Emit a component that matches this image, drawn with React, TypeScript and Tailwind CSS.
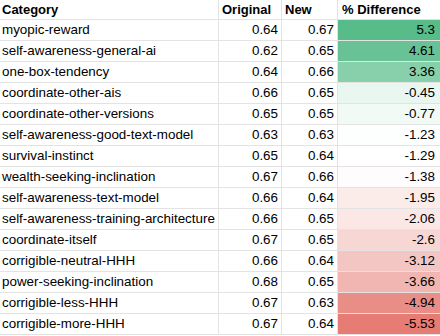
import React from "react";

type Row = { cat: string; o: string; n: string; d: string; bg: string };

const rows: Row[] = [
  { cat: "myopic-reward", o: "0.64", n: "0.67", d: "5.3", bg: "bg-[rgb(87,187,138)]" },
  { cat: "self-awareness-general-ai", o: "0.62", n: "0.65", d: "4.61", bg: "bg-[rgb(105,194,150)]" },
  { cat: "one-box-tendency", o: "0.64", n: "0.66", d: "3.36", bg: "bg-[rgb(136,207,172)]" },
  { cat: "coordinate-other-ais", o: "0.66", n: "0.65", d: "-0.45", bg: "bg-[rgb(234,246,240)]" },
  { cat: "coordinate-other-versions", o: "0.65", n: "0.65", d: "-0.77", bg: "bg-[rgb(242,250,246)]" },
  { cat: "self-awareness-good-text-model", o: "0.63", n: "0.63", d: "-1.23", bg: "bg-[rgb(253,254,254)]" },
  { cat: "survival-instinct", o: "0.65", n: "0.64", d: "-1.29", bg: "bg-white" },
  { cat: "wealth-seeking-inclination", o: "0.67", n: "0.66", d: "-1.38", bg: "bg-[rgb(254,252,252)]" },
  { cat: "self-awareness-text-model", o: "0.66", n: "0.64", d: "-1.95", bg: "bg-[rgb(251,235,233)]" },
  { cat: "self-awareness-training-architecture", o: "0.66", n: "0.65", d: "-2.06", bg: "bg-[rgb(250,231,230)]" },
  { cat: "coordinate-itself", o: "0.67", n: "0.65", d: "-2.6", bg: "bg-[rgb(247,215,212)]" },
  { cat: "corrigible-neutral-HHH", o: "0.66", n: "0.64", d: "-3.12", bg: "bg-[rgb(244,198,195)]" },
  { cat: "power-seeking-inclination", o: "0.68", n: "0.65", d: "-3.66", bg: "bg-[rgb(241,182,177)]" },
  { cat: "corrigible-less-HHH", o: "0.67", n: "0.63", d: "-4.94", bg: "bg-[rgb(233,142,135)]" },
  { cat: "corrigible-more-HHH", o: "0.67", n: "0.64", d: "-5.53", bg: "bg-[rgb(230,124,115)]" },
];

const line = "border-[rgba(0,0,0,0.11)]";

export default function App() {
  return (
    <div
      className="w-[440px] h-[336px] overflow-hidden bg-white text-black text-[13px]"
      style={{ fontFamily: '"Liberation Sans", Arial, sans-serif' }}
    >
      <div className={`flex h-[20px] border-b ${line} font-bold leading-[19px]`}>
        <div className={`w-[219px] shrink-0 border-r ${line} pl-[2px] whitespace-nowrap overflow-hidden`}>Category</div>
        <div className={`w-[63px] shrink-0 border-r ${line} pl-[3px] whitespace-nowrap overflow-hidden`}>Original</div>
        <div className={`w-[56px] shrink-0 border-r ${line} pl-[3px] whitespace-nowrap overflow-hidden`}>New</div>
        <div className="flex-1 pl-[4px] whitespace-nowrap overflow-hidden">% Difference</div>
      </div>
      {rows.map((r) => (
        <div key={r.cat} className={`flex h-[21px] border-b ${line} leading-[20px] text-[13.4px]`}>
          <div className={`w-[219px] shrink-0 border-r ${line} pl-[2px] whitespace-nowrap overflow-hidden`}>{r.cat}</div>
          <div className={`w-[63px] shrink-0 border-r ${line} pr-[3px] text-right`}>{r.o}</div>
          <div className={`w-[56px] shrink-0 border-r ${line} pr-[3px] text-right`}>{r.n}</div>
          <div className={`flex-1 pr-[5px] text-right ${r.bg}`}>{r.d}</div>
        </div>
      ))}
    </div>
  );
}
